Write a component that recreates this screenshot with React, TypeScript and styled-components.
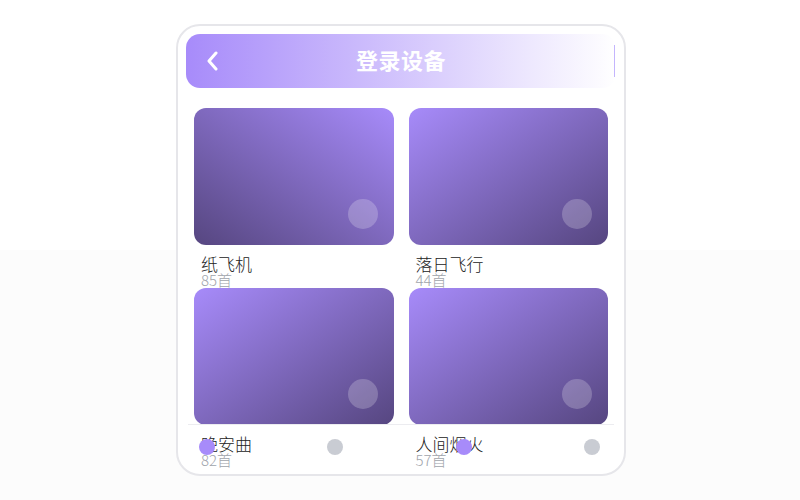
import React from 'react'
import styled, { createGlobalStyle } from 'styled-components'

const GlobalStyle = createGlobalStyle`
  html, body {
    margin: 0;
    padding: 0;
    height: 100%;
  }
  body {
    background: linear-gradient(#ffffff 0 50%, #fcfcfc 50%);
    font-family: 'Noto Sans CJK SC', 'Noto Sans', sans-serif;
  }
`

const Page = styled.div`
  width: 800px;
  height: 500px;
  box-sizing: border-box;
  padding-left: 2px;
  display: flex;
  align-items: center;
  justify-content: center;
`

const Phone = styled.div`
  position: relative;
  width: 450px;
  height: 452px;
  box-sizing: border-box;
  border: 2px solid #e6e6ea;
  border-radius: 24px;
  background: #fff;
  padding: 8px;
  overflow: hidden;
`

const Header = styled.div`
  position: relative;
  height: 54px;
  border-radius: 14px;
  background: linear-gradient(90deg, #a78bfa 0%, #ffffff 100%);
  display: flex;
  align-items: center;
  justify-content: center;

  &::after {
    content: '';
    position: absolute;
    right: 1px;
    top: 11px;
    height: 32px;
    width: 1px;
    background: #c4b5fd;
  }
`

const BackButton = styled.div`
  position: absolute;
  left: 20px;
  top: 17px;
  width: 16px;
  height: 20px;
  display: flex;
  align-items: center;
`

const Title = styled.h1`
  margin: 0 0 4px;
  font-size: 22px;
  font-weight: 700;
  color: #fff;
  letter-spacing: 0.5px;
`

const Grid = styled.div`
  display: grid;
  grid-template-columns: 1fr 1fr;
  column-gap: 15px;
  margin: 20px 8px 0;
`

const Item = styled.div`
  display: flex;
  flex-direction: column;
  height: 180px;
`

const Cover = styled.div<{ $dir: string }>`
  position: relative;
  height: 137px;
  border-radius: 12px;
  background: linear-gradient(${(p) => p.$dir}, #a78bfa 0%, #564680 100%);
`

const Play = styled.div`
  position: absolute;
  right: 16px;
  bottom: 16px;
  width: 30px;
  height: 30px;
  border-radius: 50%;
  background: rgba(255, 255, 255, 0.22);
`

const Name = styled.div`
  margin: 9px 0 0 7px;
  font-size: 17px;
  font-weight: 300;
  line-height: 19px;
  color: #222;
`

const Count = styled.div`
  margin-left: 7px;
  font-size: 15px;
  font-weight: 300;
  line-height: 14px;
  color: #a0a4ab;
`

const TabBar = styled.div`
  position: absolute;
  left: 10px;
  right: 10px;
  bottom: 0;
  height: 50px;
  box-sizing: border-box;
  padding: 0 0 6px 11px;
  border-top: 1px solid #ececf0;
  display: flex;
  align-items: center;
  gap: 113px;
`

const DotGroup = styled.div`
  width: 144px;
  display: flex;
  justify-content: space-between;
`

const Dot = styled.span<{ $active?: boolean }>`
  width: 16px;
  height: 16px;
  border-radius: 50%;
  background: ${(p) => (p.$active ? '#a78bfa' : '#c9ccd3')};
`

const playlists = [
  { name: '纸飞机', count: 85, dir: 'to bottom left' },
  { name: '落日飞行', count: 44, dir: 'to bottom right' },
  { name: '晚安曲', count: 82, dir: 'to bottom right' },
  { name: '人间烟火', count: 57, dir: 'to bottom right' },
]

const App = () => {
  return (
    <Page>
      <GlobalStyle />
      <Phone>
        <Header>
          <BackButton>
            <svg width="14" height="20" viewBox="0 0 14 20" fill="none">
              <path
                d="M10 2 L3 10 L10 18"
                stroke="#fff"
                strokeWidth="3"
                strokeLinecap="round"
                strokeLinejoin="round"
              />
            </svg>
          </BackButton>
          <Title>登录设备</Title>
        </Header>
        <Grid>
          {playlists.map((p) => (
            <Item key={p.name}>
              <Cover $dir={p.dir}>
                <Play />
              </Cover>
              <Name>{p.name}</Name>
              <Count>{p.count}首</Count>
            </Item>
          ))}
        </Grid>
        <TabBar>
          <DotGroup>
            <Dot $active />
            <Dot />
          </DotGroup>
          <DotGroup>
            <Dot $active />
            <Dot />
          </DotGroup>
        </TabBar>
      </Phone>
    </Page>
  )
}

export default App
